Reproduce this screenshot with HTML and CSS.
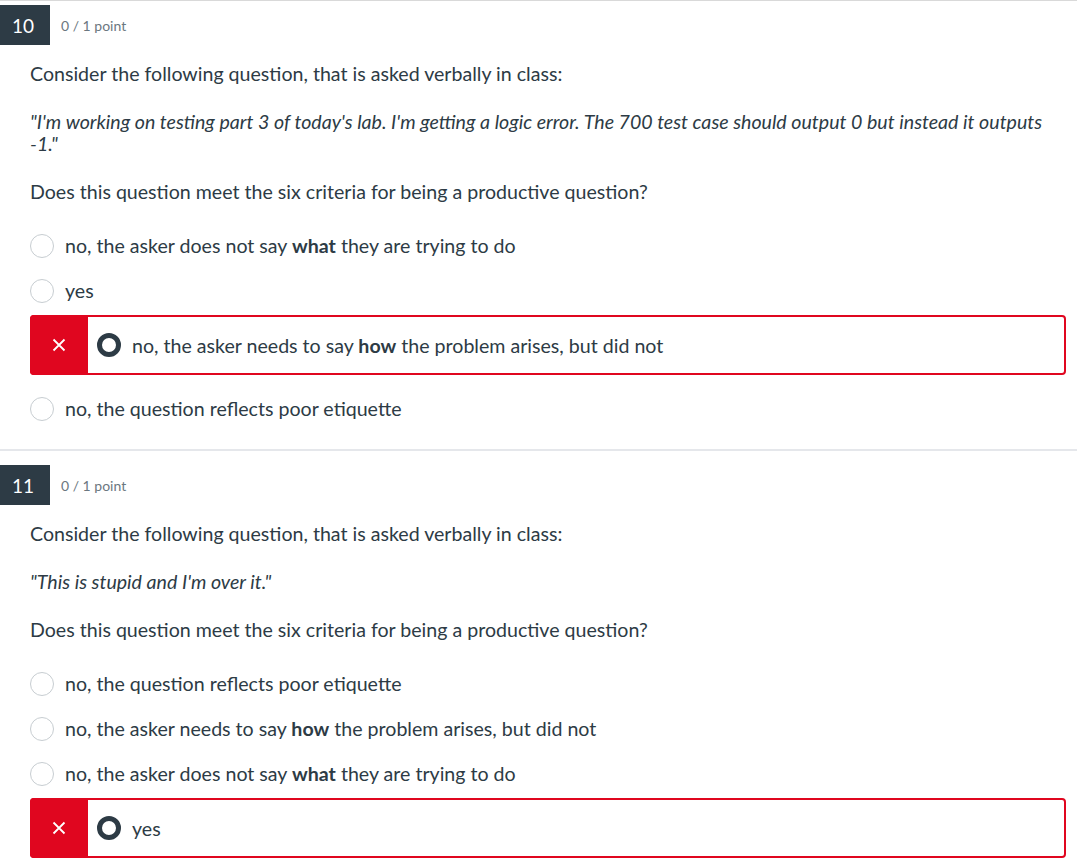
FILE: index.html
```html
<!DOCTYPE html>
<html>
<head>
<meta charset="utf-8">
<link rel="stylesheet" href="styles.css">
</head>
<body>
<div class="question first">
  <div class="q-header">
    <div class="q-num">10</div>
    <div class="q-points">0 / 1 point</div>
  </div>
  <div class="q-body">
    <p class="q-text">Consider the following question, that is asked verbally in class:</p>
    <p class="q-text"><em>"I'm working on testing part 3 of today's lab. I'm getting a logic error. The 700 test case should output 0 but instead it outputs -1."</em></p>
    <p class="q-text">Does this question meet the six criteria for being a productive question?</p>
    <div class="answers">
      <div class="answer"><span class="radio"></span><span class="label">no, the asker does not say <b>what</b> they are trying to do</span></div>
      <div class="answer"><span class="radio"></span><span class="label">yes</span></div>
      <div class="answer wrong">
        <span class="mark"><svg width="14" height="14" viewBox="0 0 14 14"><path d="M1.5 1.5 L12.5 12.5 M12.5 1.5 L1.5 12.5" stroke="#fff" stroke-width="1.8" fill="none"/></svg></span>
        <span class="radio checked"></span><span class="label">no, the asker needs to say <b>how</b> the problem arises, but did not</span>
      </div>
      <div class="answer"><span class="radio"></span><span class="label">no, the question reflects poor etiquette</span></div>
    </div>
  </div>
</div>
<div class="question">
  <div class="q-header">
    <div class="q-num">11</div>
    <div class="q-points">0 / 1 point</div>
  </div>
  <div class="q-body">
    <p class="q-text">Consider the following question, that is asked verbally in class:</p>
    <p class="q-text"><em>"This is stupid and I'm over it."</em></p>
    <p class="q-text">Does this question meet the six criteria for being a productive question?</p>
    <div class="answers">
      <div class="answer"><span class="radio"></span><span class="label">no, the question reflects poor etiquette</span></div>
      <div class="answer"><span class="radio"></span><span class="label">no, the asker needs to say <b>how</b> the problem arises, but did not</span></div>
      <div class="answer"><span class="radio"></span><span class="label">no, the asker does not say <b>what</b> they are trying to do</span></div>
      <div class="answer wrong">
        <span class="mark"><svg width="14" height="14" viewBox="0 0 14 14"><path d="M1.5 1.5 L12.5 12.5 M12.5 1.5 L1.5 12.5" stroke="#fff" stroke-width="1.8" fill="none"/></svg></span>
        <span class="radio checked"></span><span class="label">yes</span>
      </div>
    </div>
  </div>
</div>
</body>
</html>
```
FILE: styles.css
```css
html, body {
  margin: 0;
  padding: 0;
  background: #fff;
}
body {
  font-family: Lato, "Noto Sans", sans-serif;
  color: #2d3b45;
  width: 1077px;
  overflow: hidden;
}
.question {
  border-top: 2px solid #e5e7eb;
  padding-top: 14px;
  padding-bottom: 18px;
}
.question.first {
  border-top: 1px solid #d9d9d9;
  padding-top: 4px;
}
.q-header {
  display: flex;
  align-items: center;
  height: 40px;
}
.q-num {
  width: 50px;
  height: 40px;
  background: #2d3b45;
  color: #fff;
  font-size: 19px;
  display: flex;
  align-items: center;
  justify-content: center;
  box-sizing: border-box;
  padding-right: 4px;
}
.q-points {
  margin-left: 11px;
  font-size: 14px;
  color: #6b7780;
}
.q-body {
  padding: 18px 11px 0 30px;
}
.q-text {
  margin: 0 0 26px;
  font-size: 19.6px;
  line-height: 22px;
}
.q-text em {
  font-style: italic;
}
.answers {
  margin-top: -6px;
  display: flex;
  flex-direction: column;
}
.answer {
  display: flex;
  align-items: center;
  height: 45px;
  font-size: 19.6px;
}
.answer b {
  font-weight: 700;
}
.radio {
  width: 24px;
  height: 24px;
  border: 1px solid #c7cdd1;
  border-radius: 50%;
  box-sizing: border-box;
  flex: none;
  margin-right: 11px;
}
.radio.checked {
  border: 5px solid #2d3b45;
  margin-left: 9px;
  margin-right: 11px;
}
.answer.wrong {
  height: 60px;
  border: 2px solid #e0061f;
  border-radius: 4px;
  box-sizing: border-box;
  margin-top: 2px;
  margin-bottom: 11px;
}
.mark {
  align-self: stretch;
  width: 58px;
  background: #e0061f;
  display: flex;
  align-items: center;
  justify-content: center;
  margin-left: -2px;
  margin-top: -2px;
  margin-bottom: -2px;
  border-radius: 4px 0 0 4px;
}
```
